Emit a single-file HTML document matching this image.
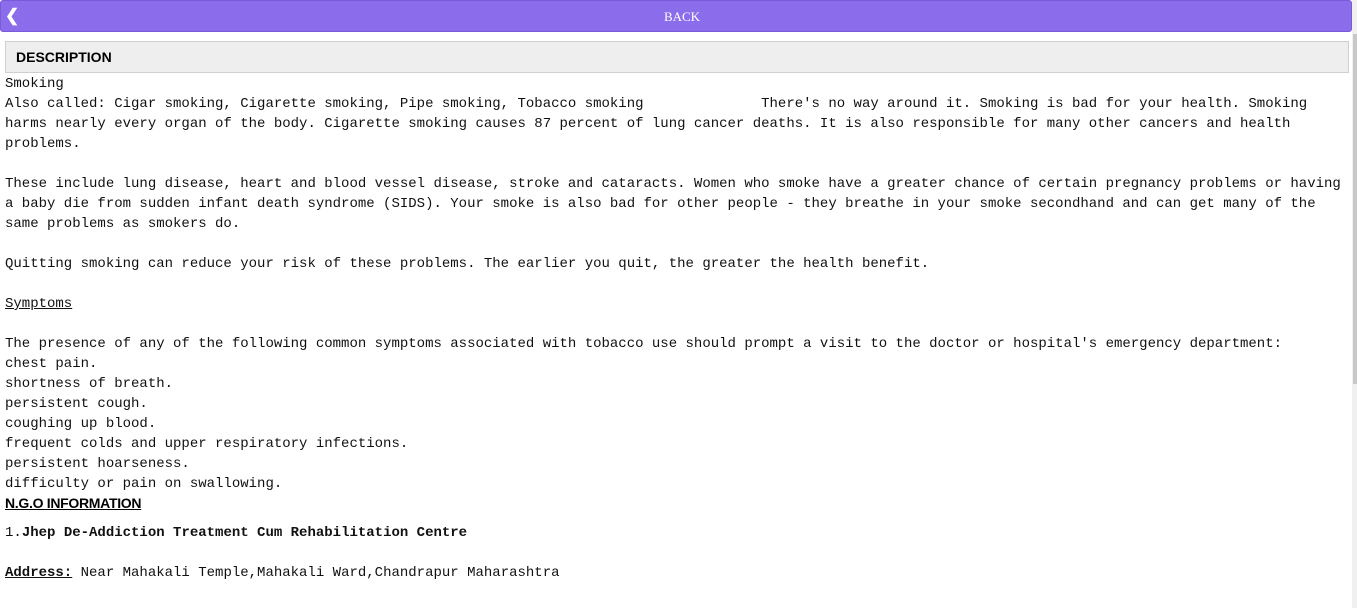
<!DOCTYPE html>
<html><head><style>
html,body{margin:0;padding:0;background:#fff;overflow:hidden;width:1357px;height:608px}
.bar{position:absolute;left:0;top:0;width:1338px;padding-left:12px;height:30px;background:#8b6cea;border:1px solid #7a5ad8;border-radius:3px;color:#fff;font-family:"Liberation Serif",serif;font-size:13px;text-align:center;line-height:31px}
.bar .ch{position:absolute;left:4px;top:0;font-family:"Liberation Sans",sans-serif;font-weight:bold;font-size:17px;line-height:30px}
.desc{position:absolute;left:5px;top:41px;height:30px;background:#eeeeee;border:1px solid #cfcfcf;font-family:"Liberation Sans",sans-serif;font-weight:bold;font-size:14px;line-height:31px;padding-left:10px;width:1332px}
.txt{position:absolute;left:5px;top:74px;font-family:"Liberation Mono","Courier New",monospace;font-size:14px;line-height:20px;color:#111;white-space:pre;margin:0}
.ngo{position:absolute;left:5px;top:495px;font-family:"Liberation Sans",sans-serif;font-weight:bold;font-size:14px;text-decoration:underline;letter-spacing:-0.3px}
.m{position:absolute;left:5px;font-family:"Liberation Mono",monospace;font-size:14px;white-space:pre;color:#111}
.sb{position:absolute;left:1352px;top:0;width:5px;height:608px;background:#f0f0f0}
.th{position:absolute;left:1353px;top:34px;width:4px;height:350px;background:#c8c8c8}
</style></head><body>
<div class="bar"><span class="ch">&#10094;</span>BACK</div>
<div class="desc">DESCRIPTION</div>
<pre class="txt">Smoking
Also called: Cigar smoking, Cigarette smoking, Pipe smoking, Tobacco smoking              There's no way around it. Smoking is bad for your health. Smoking
harms nearly every organ of the body. Cigarette smoking causes 87 percent of lung cancer deaths. It is also responsible for many other cancers and health
problems.

These include lung disease, heart and blood vessel disease, stroke and cataracts. Women who smoke have a greater chance of certain pregnancy problems or having
a baby die from sudden infant death syndrome (SIDS). Your smoke is also bad for other people - they breathe in your smoke secondhand and can get many of the
same problems as smokers do.

Quitting smoking can reduce your risk of these problems. The earlier you quit, the greater the health benefit.

<u>Symptoms</u>

The presence of any of the following common symptoms associated with tobacco use should prompt a visit to the doctor or hospital's emergency department:
chest pain.
shortness of breath.
persistent cough.
coughing up blood.
frequent colds and upper respiratory infections.
persistent hoarseness.
difficulty or pain on swallowing.</pre>
<div class="ngo">N.G.O INFORMATION</div>
<div class="m" style="top:525px">1.<b>Jhep De-Addiction Treatment Cum Rehabilitation Centre</b></div>
<div class="m" style="top:565px"><b><u>Address:</u></b> Near Mahakali Temple,Mahakali Ward,Chandrapur Maharashtra</div>
<div class="sb"></div><div class="th"></div>
</body></html>
